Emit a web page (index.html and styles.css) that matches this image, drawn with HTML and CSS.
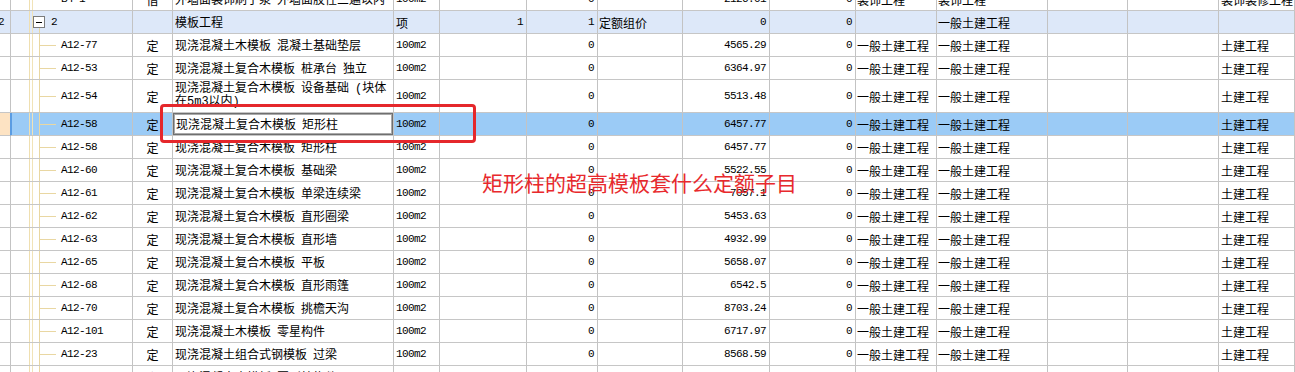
FILE: index.html
```html
<!DOCTYPE html>
<html>
<head>
<meta charset="utf-8">
<link rel="stylesheet" href="styles.css">
</head>
<body>
<div class="sheet">
  <div class="grid">
    <div class="row top">
      <div class="c"></div><div class="c code"><span class="m">B4-1</span></div><div class="c ctr">借</div><div class="c d">外墙面装饰刷子浆 外墙面胶性三遍以内</div><div class="c m">100m2</div><div class="c"></div><div class="c m r">0</div><div class="c"></div><div class="c m r">2126.01</div><div class="c m r">0</div><div class="c p1">装饰工程</div><div class="c p1">装饰工程</div><div class="c"></div><div class="c"></div><div class="c p2">装饰装修工程</div>
    </div>
    <div class="row group">
      <div class="c m num">2</div><div class="c code"><span class="exp"></span><span class="m">2</span></div><div class="c"></div><div class="c d">模板工程</div><div class="c">项</div><div class="c m r">1</div><div class="c m r">1</div><div class="c p1">定额组价</div><div class="c m r">0</div><div class="c m r">0</div><div class="c"></div><div class="c p1">一般土建工程</div><div class="c"></div><div class="c"></div><div class="c"></div>
    </div>
    <div class="row child">
      <div class="c"></div><div class="c code"><span class="m">A12-77</span></div><div class="c ctr">定</div><div class="c d">现浇混凝土木模板 混凝土基础垫层</div><div class="c m">100m2</div><div class="c"></div><div class="c m r">0</div><div class="c"></div><div class="c m r">4565.29</div><div class="c m r">0</div><div class="c p1">一般土建工程</div><div class="c p1">一般土建工程</div><div class="c"></div><div class="c"></div><div class="c p2">土建工程</div>
    </div>
    <div class="row child">
      <div class="c"></div><div class="c code"><span class="m">A12-53</span></div><div class="c ctr">定</div><div class="c d">现浇混凝土复合木模板 桩承台 独立</div><div class="c m">100m2</div><div class="c"></div><div class="c m r">0</div><div class="c"></div><div class="c m r">6364.97</div><div class="c m r">0</div><div class="c p1">一般土建工程</div><div class="c p1">一般土建工程</div><div class="c"></div><div class="c"></div><div class="c p2">土建工程</div>
    </div>
    <div class="row child tall">
      <div class="c"></div><div class="c code"><span class="m">A12-54</span></div><div class="c ctr">定</div><div class="c d wrap">现浇混凝土复合木模板 设备基础 (块体在5m3以内)</div><div class="c m">100m2</div><div class="c"></div><div class="c m r">0</div><div class="c"></div><div class="c m r">5513.48</div><div class="c m r">0</div><div class="c p1">一般土建工程</div><div class="c p1">一般土建工程</div><div class="c"></div><div class="c"></div><div class="c p2">土建工程</div>
    </div>
    <div class="row child sel">
      <div class="c"></div><div class="c code"><span class="m">A12-58</span></div><div class="c ctr">定</div><div class="c edit-cell"><div class="edit d">现浇混凝土复合木模板 矩形柱</div></div><div class="c m">100m2</div><div class="c"></div><div class="c m r">0</div><div class="c"></div><div class="c m r">6457.77</div><div class="c m r">0</div><div class="c p1">一般土建工程</div><div class="c p1">一般土建工程</div><div class="c"></div><div class="c"></div><div class="c p2">土建工程</div>
    </div>
    <div class="row child">
      <div class="c"></div><div class="c code"><span class="m">A12-58</span></div><div class="c ctr">定</div><div class="c d">现浇混凝土复合木模板 矩形柱</div><div class="c m">100m2</div><div class="c"></div><div class="c m r">0</div><div class="c"></div><div class="c m r">6457.77</div><div class="c m r">0</div><div class="c p1">一般土建工程</div><div class="c p1">一般土建工程</div><div class="c"></div><div class="c"></div><div class="c p2">土建工程</div>
    </div>
    <div class="row child">
      <div class="c"></div><div class="c code"><span class="m">A12-60</span></div><div class="c ctr">定</div><div class="c d">现浇混凝土复合木模板 基础梁</div><div class="c m">100m2</div><div class="c"></div><div class="c m r">0</div><div class="c"></div><div class="c m r">5522.55</div><div class="c m r">0</div><div class="c p1">一般土建工程</div><div class="c p1">一般土建工程</div><div class="c"></div><div class="c"></div><div class="c p2">土建工程</div>
    </div>
    <div class="row child">
      <div class="c"></div><div class="c code"><span class="m">A12-61</span></div><div class="c ctr">定</div><div class="c d">现浇混凝土复合木模板 单梁连续梁</div><div class="c m">100m2</div><div class="c"></div><div class="c m r">0</div><div class="c"></div><div class="c m r">7057.1</div><div class="c m r">0</div><div class="c p1">一般土建工程</div><div class="c p1">一般土建工程</div><div class="c"></div><div class="c"></div><div class="c p2">土建工程</div>
    </div>
    <div class="row child">
      <div class="c"></div><div class="c code"><span class="m">A12-62</span></div><div class="c ctr">定</div><div class="c d">现浇混凝土复合木模板 直形圈梁</div><div class="c m">100m2</div><div class="c"></div><div class="c m r">0</div><div class="c"></div><div class="c m r">5453.63</div><div class="c m r">0</div><div class="c p1">一般土建工程</div><div class="c p1">一般土建工程</div><div class="c"></div><div class="c"></div><div class="c p2">土建工程</div>
    </div>
    <div class="row child">
      <div class="c"></div><div class="c code"><span class="m">A12-63</span></div><div class="c ctr">定</div><div class="c d">现浇混凝土复合木模板 直形墙</div><div class="c m">100m2</div><div class="c"></div><div class="c m r">0</div><div class="c"></div><div class="c m r">4932.99</div><div class="c m r">0</div><div class="c p1">一般土建工程</div><div class="c p1">一般土建工程</div><div class="c"></div><div class="c"></div><div class="c p2">土建工程</div>
    </div>
    <div class="row child">
      <div class="c"></div><div class="c code"><span class="m">A12-65</span></div><div class="c ctr">定</div><div class="c d">现浇混凝土复合木模板 平板</div><div class="c m">100m2</div><div class="c"></div><div class="c m r">0</div><div class="c"></div><div class="c m r">5658.07</div><div class="c m r">0</div><div class="c p1">一般土建工程</div><div class="c p1">一般土建工程</div><div class="c"></div><div class="c"></div><div class="c p2">土建工程</div>
    </div>
    <div class="row child">
      <div class="c"></div><div class="c code"><span class="m">A12-68</span></div><div class="c ctr">定</div><div class="c d">现浇混凝土复合木模板 直形雨篷</div><div class="c m">100m2</div><div class="c"></div><div class="c m r">0</div><div class="c"></div><div class="c m r">6542.5</div><div class="c m r">0</div><div class="c p1">一般土建工程</div><div class="c p1">一般土建工程</div><div class="c"></div><div class="c"></div><div class="c p2">土建工程</div>
    </div>
    <div class="row child">
      <div class="c"></div><div class="c code"><span class="m">A12-70</span></div><div class="c ctr">定</div><div class="c d">现浇混凝土复合木模板 挑檐天沟</div><div class="c m">100m2</div><div class="c"></div><div class="c m r">0</div><div class="c"></div><div class="c m r">8703.24</div><div class="c m r">0</div><div class="c p1">一般土建工程</div><div class="c p1">一般土建工程</div><div class="c"></div><div class="c"></div><div class="c p2">土建工程</div>
    </div>
    <div class="row child">
      <div class="c"></div><div class="c code"><span class="m">A12-101</span></div><div class="c ctr">定</div><div class="c d">现浇混凝土木模板 零星构件</div><div class="c m">100m2</div><div class="c"></div><div class="c m r">0</div><div class="c"></div><div class="c m r">6717.97</div><div class="c m r">0</div><div class="c p1">一般土建工程</div><div class="c p1">一般土建工程</div><div class="c"></div><div class="c"></div><div class="c p2">土建工程</div>
    </div>
    <div class="row child">
      <div class="c"></div><div class="c code"><span class="m">A12-23</span></div><div class="c ctr">定</div><div class="c d">现浇混凝土组合式钢模板 过梁</div><div class="c m">100m2</div><div class="c"></div><div class="c m r">0</div><div class="c"></div><div class="c m r">8568.59</div><div class="c m r">0</div><div class="c p1">一般土建工程</div><div class="c p1">一般土建工程</div><div class="c"></div><div class="c"></div><div class="c p2">土建工程</div>
    </div>
    <div class="row child">
      <div class="c"></div><div class="c code"><span class="m">A12-19</span></div><div class="c ctr">定</div><div class="c d">现浇混凝土木模板 圆形柱构件</div><div class="c m">100m2</div><div class="c"></div><div class="c m r">0</div><div class="c"></div><div class="c m r">7126.35</div><div class="c m r">0</div><div class="c p1">一般土建工程</div><div class="c p1">一般土建工程</div><div class="c"></div><div class="c"></div><div class="c p2">土建工程</div>
    </div>
  </div>
  <div class="redbox"></div>
  <div class="note">矩形柱的超高模板套什么定额子目</div>
</div>
</body>
</html>
```

FILE: styles.css
```css
html, body {
  margin: 0;
  padding: 0;
  background: #ffffff;
  overflow: hidden;
}

.sheet {
  position: relative;
  width: 1295px;
  height: 372px;
  overflow: hidden;
}

.grid {
  display: flex;
  flex-direction: column;
}

.row {
  display: grid;
  grid-template-columns: 11px 122px 40px 221px 46px 87px 71px 85px 87px 86px 81px 111px 80px 91px 1fr;
  height: 23px;
  flex: 0 0 auto;
  background: #ffffff;
}

.row.top {
  margin-top: -12px;
}

.row.tall {
  height: 33px;
}

.row.group {
  background: #dde8f9;
}

.row.sel {
  background: #9bcbf6;
}

.c {
  box-sizing: border-box;
  border-right: 1px solid #c3c3c3;
  border-bottom: 1px solid #c6c6c6;
  display: flex;
  align-items: center;
  overflow: hidden;
  white-space: nowrap;
  padding: 0 2px;
  font-family: "Noto Sans CJK SC", sans-serif;
  font-size: 12px;
  color: #000000;
}

.m {
  font-family: "Liberation Mono", monospace;
  font-size: 11px;
  letter-spacing: -0.6px;
}

.r {
  justify-content: flex-end;
  padding-right: 3px;
}

.ctr {
  justify-content: center;
}

.p1 {
  padding-left: 1px;
}

.p2 {
  padding-left: 2px;
}

.d {
  font-family: "Liberation Mono", "Noto Sans CJK SC", monospace;
  font-size: 12px;
  word-spacing: -1.2px;
}

.wrap {
  white-space: normal;
  line-height: 13px;
  align-items: center;
}

.num {
  justify-content: flex-end;
  padding-right: 6px;
}

/* tree column */
.code {
  padding-left: 50px;
  background:
    linear-gradient(#efdfb0, #efdfb0) 18px 0 / 1px 100% no-repeat,
    linear-gradient(#f1e3b8, #f1e3b8) 21px 0 / 1px 100% no-repeat;
}

.child .code {
  background:
    linear-gradient(#efdfb0, #efdfb0) 18px 0 / 1px 100% no-repeat,
    linear-gradient(#f1e3b8, #f1e3b8) 21px 0 / 1px 100% no-repeat,
    linear-gradient(#e9d7a2, #e9d7a2) 28px 0 / 1px 100% no-repeat,
    linear-gradient(#e9d7a2, #e9d7a2) 29px 50% / 16px 1px no-repeat;
}

.group .code {
  padding-left: 22px;
  background:
    linear-gradient(#efdfb0, #efdfb0) 18px 0 / 1px 100% no-repeat,
    linear-gradient(#f1e3b8, #f1e3b8) 21px 0 / 1px 100% no-repeat,
    linear-gradient(#e9d7a2, #e9d7a2) 28px 17px / 1px 100% no-repeat;
}

.exp {
  box-sizing: border-box;
  width: 12px;
  height: 12px;
  border: 1px solid #7b7b7b;
  background: #ffffff linear-gradient(#000, #000) center / 6px 1px no-repeat;
  margin-right: 6px;
  flex: 0 0 auto;
}

/* selected row */
.sel .c:first-child {
  background: #fde3c3;
  border-right-color: #5b9ce2;
}

.sel .code {
  box-shadow: inset 1px 0 #5b9ce2;
}

.edit-cell {
  padding: 0;
  align-items: stretch;
}

.edit {
  box-sizing: border-box;
  flex: 1 1 auto;
  background: #ffffff;
  border: 1px solid #6f6f6f;
  box-shadow: inset 0 0 0 1px #a9a9a9;
  padding-left: 2px;
  display: flex;
  align-items: center;
  white-space: nowrap;
  overflow: hidden;
}

/* annotation overlay */
.redbox {
  position: absolute;
  left: 160px;
  top: 104px;
  width: 316px;
  height: 39px;
  box-sizing: border-box;
  border: 3px solid #e5272b;
  border-radius: 4px;
}

.note {
  position: absolute;
  left: 482px;
  top: 172px;
  font-family: "Noto Sans CJK SC", sans-serif;
  font-size: 21px;
  line-height: 21px;
  color: #e8292d;
  white-space: nowrap;
}
```
